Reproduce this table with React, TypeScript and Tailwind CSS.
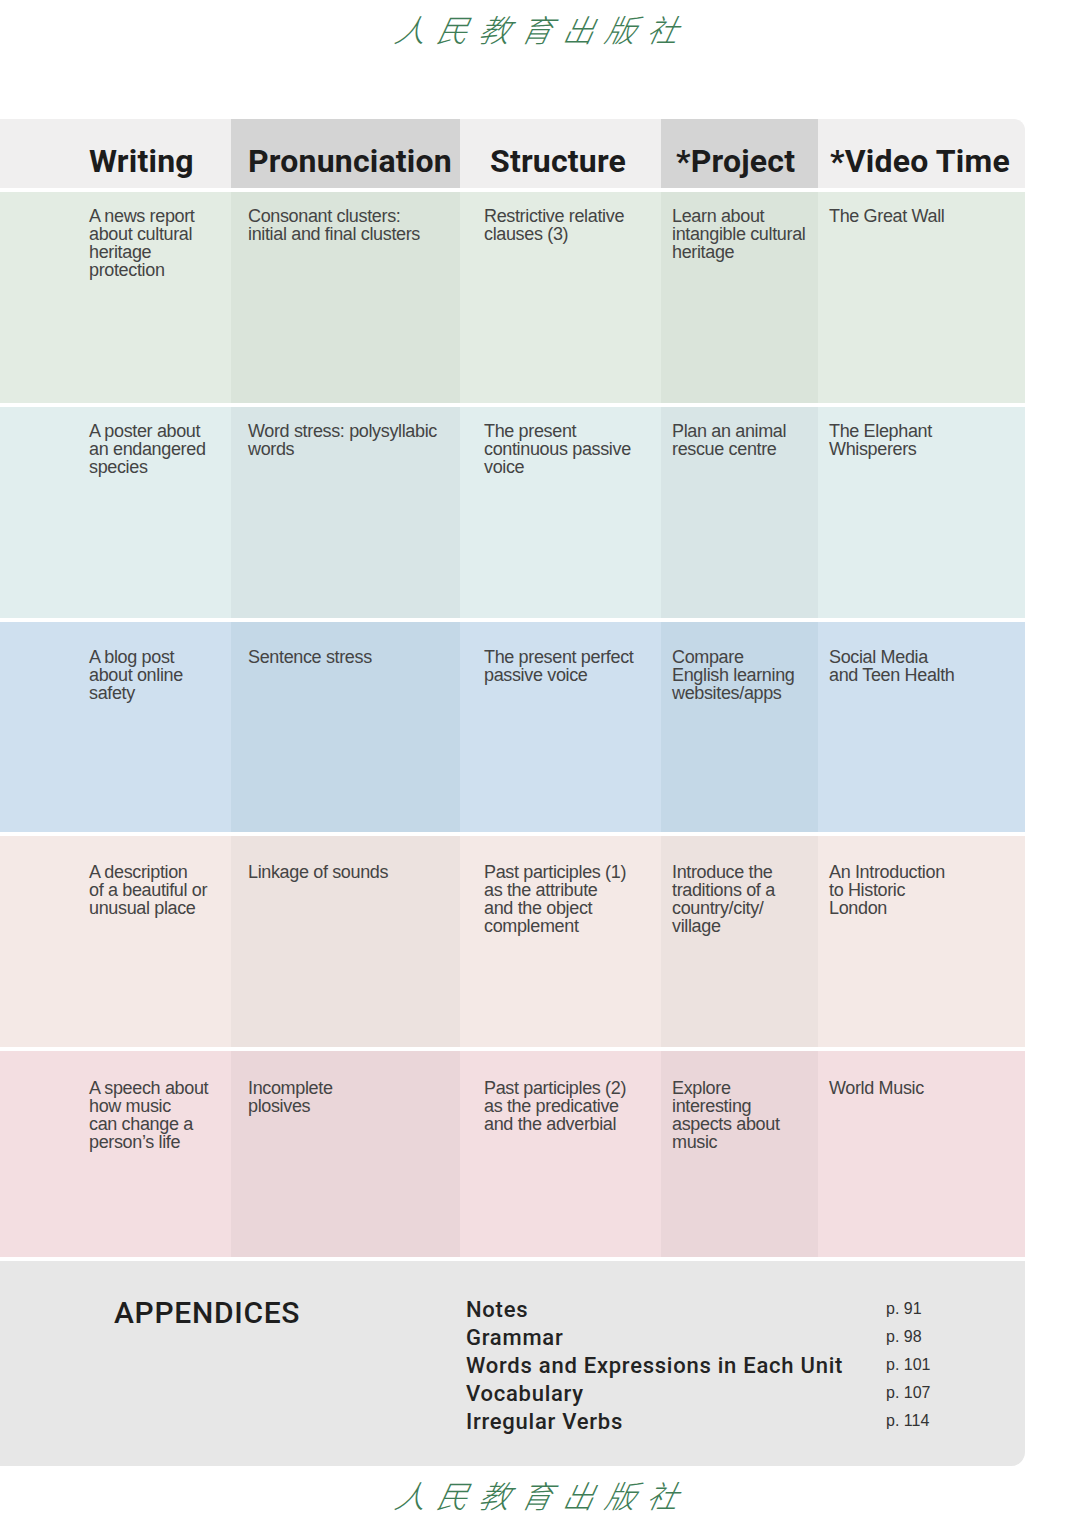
import React from "react";

type Row = {
  cells: string[][];
  bg: string;
  dark: string;
  pt: string;
  h: string;
};

const headers = [
  { label: "Writing", pad: "pl-[89px]" },
  { label: "Pronunciation", pad: "pl-[17px]" },
  { label: "Structure", pad: "pl-[30px]" },
  { label: "*Project", pad: "pl-[15px]" },
  { label: "*Video Time", pad: "pl-[12px]" },
];

const colW = ["w-[231px]", "w-[229px]", "w-[201px]", "w-[157px]", "w-[207px]"];
const colPad = ["pl-[89px]", "pl-[17px]", "pl-[24px]", "pl-[11px]", "pl-[11px]"];

const rows: Row[] = [
  {
    bg: "bg-[#e3ece3]",
    dark: "bg-[#dae4da]",
    pt: "pt-[15px]",
    h: "h-[211px]",
    cells: [
      ["A news report", "about cultural", "heritage", "protection"],
      ["Consonant clusters:", "initial and final clusters"],
      ["Restrictive relative", "clauses (3)"],
      ["Learn about", "intangible cultural", "heritage"],
      ["The Great Wall"],
    ],
  },
  {
    bg: "bg-[#e1eeee]",
    dark: "bg-[#d8e5e6]",
    pt: "pt-[15px]",
    h: "h-[211px]",
    cells: [
      ["A poster about", "an endangered", "species"],
      ["Word stress: polysyllabic", "words"],
      ["The present", "continuous passive", "voice"],
      ["Plan an animal", "rescue centre"],
      ["The Elephant", "Whisperers"],
    ],
  },
  {
    bg: "bg-[#cfe0ef]",
    dark: "bg-[#c4d8e7]",
    pt: "pt-[26px]",
    h: "h-[210px]",
    cells: [
      ["A blog post", "about online", "safety"],
      ["Sentence stress"],
      ["The present perfect", "passive voice"],
      ["Compare", "English learning", "websites/apps"],
      ["Social Media", "and Teen Health"],
    ],
  },
  {
    bg: "bg-[#f4e9e6]",
    dark: "bg-[#ece2df]",
    pt: "pt-[27px]",
    h: "h-[211px]",
    cells: [
      ["A description", "of a beautiful or", "unusual place"],
      ["Linkage of sounds"],
      ["Past participles (1)", "as the attribute", "and the object", "complement"],
      ["Introduce the", "traditions of a", "country/city/", "village"],
      ["An Introduction", "to Historic", "London"],
    ],
  },
  {
    bg: "bg-[#f3dee1]",
    dark: "bg-[#ead6d9]",
    pt: "pt-[28px]",
    h: "h-[206px]",
    cells: [
      ["A speech about", "how music", "can change a", "person\u2019s life"],
      ["Incomplete", "plosives"],
      ["Past participles (2)", "as the predicative", "and the adverbial"],
      ["Explore", "interesting", "aspects about", "music"],
      ["World Music"],
    ],
  },
];

const appendices = [
  ["Notes", "p. 91"],
  ["Grammar", "p. 98"],
  ["Words and Expressions in Each Unit", "p. 101"],
  ["Vocabulary", "p. 107"],
  ["Irregular Verbs", "p. 114"],
];

const din = "font-['Roboto','DejaVu_Sans',sans-serif]";
const helv = "font-['Liberation_Sans','Arial',sans-serif]";

function Logo() {
  return (
    <div className="flex justify-center">
      <div className="pl-[6px] h-[58px] flex items-center font-['Noto_Sans_CJK_SC',serif] font-light italic text-[31px] tracking-[11px] text-[#3e7d56] -skew-x-12">
        人民教育出版社
      </div>
    </div>
  );
}

export default function App() {
  return (
    <div className="w-[1080px] h-[1526px] bg-white overflow-hidden">
      <Logo />

      <div className="mt-[61px] w-[1025px] flex flex-col gap-[4px]">
        {/* header */}
        <div className="flex h-[69px] rounded-tr-[11px] overflow-hidden bg-[#f0efef]">
          {headers.map((hd, i) => (
            <div
              key={hd.label}
              className={`${colW[i]} ${hd.pad} ${i % 2 === 1 ? "bg-[#d4d4d4]" : ""} flex items-center pt-[14px] ${din} font-bold text-[32px] tracking-[0.2px] text-[#1c1c1c]`}
            >
              {hd.label}
            </div>
          ))}
        </div>

        {rows.map((row, r) => (
          <div key={r} className={`flex ${row.h}`}>
            {row.cells.map((lines, i) => (
              <div
                key={i}
                className={`${colW[i]} ${colPad[i]} ${row.pt} ${i % 2 === 1 ? row.dark : row.bg} ${helv} text-[18px] leading-[18px] tracking-[-0.35px] text-[#444]`}
              >
                {lines.map((l) => (
                  <div key={l}>{l}</div>
                ))}
              </div>
            ))}
          </div>
        ))}

        {/* appendices */}
        <div className="h-[205px] bg-[#e7e7e7] rounded-br-[14px] flex">
          <div className={`w-[466px] pl-[114px] pt-[29px] ${din} font-medium text-[30px] tracking-[0.7px] text-[#1e1e1e]`}>
            APPENDICES
          </div>
          <div className="flex flex-col pt-[34px]">
            {appendices.map(([name, page]) => (
              <div key={name} className="flex items-center h-[28px]">
                <div className={`w-[420px] ${din} font-medium text-[22px] tracking-[0.75px] text-[#232323]`}>{name}</div>
                <div className={`${helv} text-[16px] text-[#333]`}>{page}</div>
              </div>
            ))}
          </div>
        </div>
      </div>

      <Logo />
    </div>
  );
}
